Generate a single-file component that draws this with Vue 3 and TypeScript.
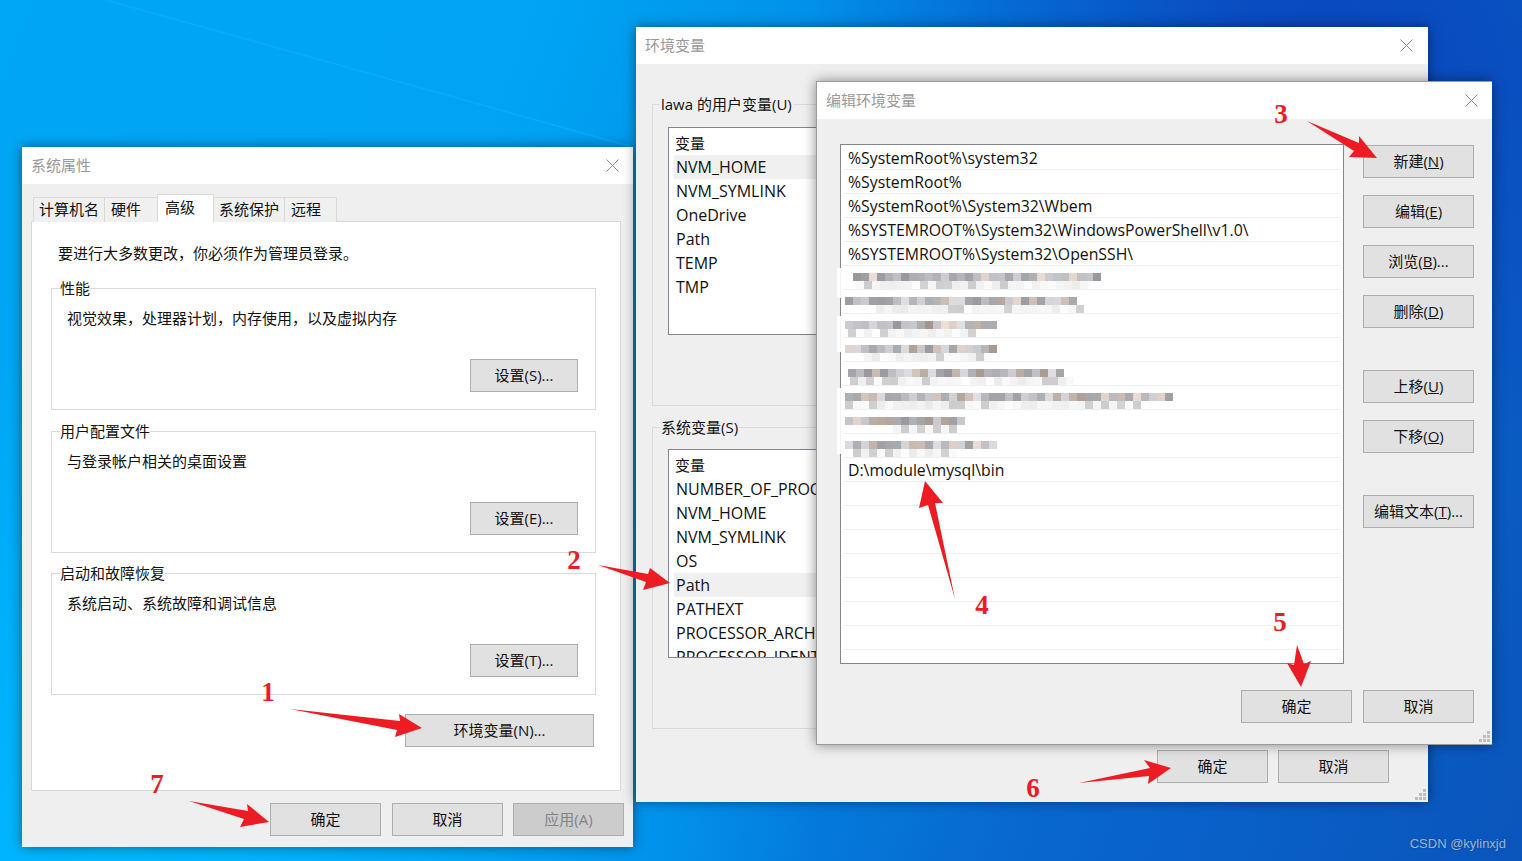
<script setup lang="ts">
/**
 * Three overlapping Windows dialogs (system properties, environment variables,
 * edit variable) on the desktop, with numbered red arrows on top.
 */
const perfGroups = [
  { title: '性能', text: '视觉效果，处理器计划，内存使用，以及虚拟内存', btn: '设置(S)...' },
  { title: '用户配置文件', text: '与登录帐户相关的桌面设置', btn: '设置(E)...' },
  { title: '启动和故障恢复', text: '系统启动、系统故障和调试信息', btn: '设置(T)...' },
]
const tabs = ['计算机名', '硬件', '高级', '系统保护', '远程']
const userVars = ['NVM_HOME', 'NVM_SYMLINK', 'OneDrive', 'Path', 'TEMP', 'TMP']
const sysVars = ['NUMBER_OF_PROCESSORS', 'NVM_HOME', 'NVM_SYMLINK', 'OS', 'Path', 'PATHEXT', 'PROCESSOR_ARCHITECTURE', 'PROCESSOR_IDENTIFIER']

const pathRows = [
  '%SystemRoot%\\system32',
  '%SystemRoot%',
  '%SystemRoot%\\System32\\Wbem',
  '%SYSTEMROOT%\\System32\\WindowsPowerShell\\v1.0\\',
  '%SYSTEMROOT%\\System32\\OpenSSH\\',
  '', '', '', '', '', '', '', '',
  'D:\\module\\mysql\\bin',
  '', '', '', '', '', '', '', '',
]

const sideButtons = [
  { pre: '新建(', key: 'N', cls: 'gap-0' },
  { pre: '编辑(', key: 'E', cls: 'gap-0' },
  { pre: '浏览(', key: 'B', post: ')...', cls: 'gap-0' },
  { pre: '删除(', key: 'D', cls: 'gap-1' },
  { pre: '上移(', key: 'U', cls: 'gap-0' },
  { pre: '下移(', key: 'O', cls: 'gap-1' },
  { pre: '编辑文本(', key: 'T', post: ')...', cls: 'gap-0' },
]

// blurred rows of the path list: [top, main band x0, x1, lower band x0, x1]
const blurRows = [
  [273, 853, 1098, 856, 1086],
  [297, 845, 1070, 860, 1080],
  [321, 845, 990, 848, 973],
  [345, 845, 990, 864, 990],
  [369, 848, 1062, 850, 1070],
  [393, 845, 1173, 845, 1140],
  [417, 845, 965, 893, 957],
  [441, 845, 990, 853, 957],
]

function rnd(seed: number) {
  const v = Math.sin(seed * 127.1 + 311.7) * 43758.5453
  return v - Math.floor(v)
}

type Cell = { x: number; y: number; fill: string }
const mosaic: Cell[] = []
const cell = 8
blurRows.forEach(([top, a0, a1, b0, b1], r) => {
  for (let x = a0; x < a1; x += cell) {
    const n = rnd(r * 100 + x)
    const g = Math.round(150 + n * 75)
    const warm = rnd(x + r) > 0.75 ? 14 : 0
    mosaic.push({ x, y: top, fill: `rgb(${g + warm},${g},${g - warm + 4})` })
  }
  for (let x = b0; x < b1; x += cell) {
    const n = rnd(r * 200 + x + 7)
    const g = n > 0.72 ? Math.round(188 + n * 22) : Math.round(234 + n * 28)
    mosaic.push({ x, y: top + 8, fill: `rgb(${g},${g},${g})` })
  }
})

const arrows = [
  '290,709 400,721 399,714 422,728 395,737 397,730',
  '598,565 648,574 650,568 670,583 643,590 646,582',
  '1307,121 1359,143 1359,136 1377,158 1349,157 1354,151',
  '955,599 928,505 919,508 925,481 943,503 935,503',
  '1297,645 1304,664 1311,661 1301,687 1287,663 1294,665',
  '1079,783 1150,768 1144,760 1171,768 1148,784 1149,776',
  '189,801 248,811 247,804 269,822 240,827 244,819',
]
const marks = [
  { n: '1', x: 268, y: 701 },
  { n: '2', x: 574, y: 569 },
  { n: '3', x: 1281, y: 123 },
  { n: '4', x: 982, y: 614 },
  { n: '5', x: 1280, y: 631 },
  { n: '6', x: 1033, y: 797 },
  { n: '7', x: 157, y: 793 },
]
const gripDots = [
  [8, 0], [4, 4], [8, 4], [0, 8], [4, 8], [8, 8],
]
</script>

<template>
  <div class="desktop">
    <svg class="beam" viewBox="0 0 1522 861">
      <line x1="106" y1="0" x2="629" y2="146" />
    </svg>

    <!-- system properties -->
    <section class="win win-sys">
      <header class="title">
        <span>系统属性</span>
        <svg class="close" viewBox="0 0 13 13"><path d="M.5.5l12 12M12.500.5l-12 12" /></svg>
      </header>
      <div class="sys-body">
        <nav class="tabs">
          <span v-for="t in tabs" :key="t" class="tab" :class="{ 'tab-on': t === '高级' }">{{ t }}</span>
        </nav>
        <div class="panel">
          <p class="notice">要进行大多数更改，你必须作为管理员登录。</p>
          <div v-for="g in perfGroups" :key="g.title" class="group">
            <span class="group-label">{{ g.title }}</span>
            <p class="group-text">{{ g.text }}</p>
            <button class="btn group-btn">{{ g.btn }}</button>
          </div>
          <button class="btn env-btn">环境变量(N)...</button>
        </div>
        <footer class="sys-foot">
          <button class="btn">确定</button>
          <button class="btn">取消</button>
          <button class="btn btn-off">应用(A)</button>
        </footer>
      </div>
    </section>

    <!-- environment variables -->
    <section class="win win-env">
      <header class="title">
        <span>环境变量</span>
        <svg class="close" viewBox="0 0 13 13"><path d="M.5.5l12 12M12.500.5l-12 12" /></svg>
      </header>
      <div class="env-body">
        <div class="env-group">
          <span class="env-label">lawa 的用户变量(U)</span>
          <div class="var-list">
            <div class="var-row var-head">变量</div>
            <div v-for="(v, i) in userVars" :key="v" class="var-row" :class="{ 'var-on': i === 0 }">{{ v }}</div>
          </div>
        </div>
        <div class="env-group env-group-2">
          <span class="env-label">系统变量(S)</span>
          <div class="var-list var-list-2">
            <div class="var-row var-head">变量</div>
            <div v-for="(v, i) in sysVars" :key="v" class="var-row" :class="{ 'var-on': i === 4 }">{{ v }}</div>
          </div>
        </div>
        <footer class="env-foot">
          <button class="btn">确定</button>
          <button class="btn">取消</button>
        </footer>
      </div>
      <svg class="grip" viewBox="0 0 11 11"><rect v-for="d in gripDots" :key="d.join()" :x="d[0]" :y="d[1]" width="3" height="3" /></svg>
    </section>

    <!-- edit variable -->
    <section class="win win-edit">
      <header class="title">
        <span>编辑环境变量</span>
        <svg class="close" viewBox="0 0 13 13"><path d="M.5.5l12 12M12.500.5l-12 12" /></svg>
      </header>
      <div class="edit-body">
        <div class="edit-main">
          <div class="path-list">
            <div v-for="(p, i) in pathRows" :key="i" class="path-row">{{ p }}</div>
          </div>
          <aside class="side">
            <button v-for="b in sideButtons" :key="b.pre" class="btn" :class="b.cls">
              {{ b.pre }}<u>{{ b.key }}</u>{{ b.post || ')' }}
            </button>
          </aside>
        </div>
        <footer class="edit-foot">
          <button class="btn">确定</button>
          <button class="btn">取消</button>
        </footer>
      </div>
      <svg class="grip" viewBox="0 0 11 11"><rect v-for="d in gripDots" :key="d.join()" :x="d[0]" :y="d[1]" width="3" height="3" /></svg>
    </section>

    <!-- mosaic + annotations -->
    <svg class="overlay" viewBox="0 0 1522 861">
      <rect x="837" y="268" width="6" height="30" fill="#fff" opacity=".9" />
      <rect x="837" y="316" width="6" height="36" fill="#fff" opacity=".9" />
      <rect x="837" y="388" width="6" height="66" fill="#fff" opacity=".9" />
      <rect v-for="(c, i) in mosaic" :key="i" :x="c.x" :y="c.y" width="8" height="8" :fill="c.fill" />
      <polygon v-for="a in arrows" :key="a" :points="a" fill="#ed1c24" />
      <text v-for="m in marks" :key="m.n" :x="m.x" :y="m.y" class="mark" text-anchor="middle">{{ m.n }}</text>
    </svg>

    <span class="watermark">CSDN @kylinxjd</span>
  </div>
</template>

<style scoped>
.desktop {
  position: relative;
  width: 1522px;
  height: 861px;
  overflow: hidden;
  background:
    radial-gradient(ellipse 520px 420px at 1320px 60px, #0a45bd 0%, rgba(10, 69, 189, 0) 100%),
    radial-gradient(ellipse 700px 520px at 120px 861px, #00b8ff 0%, rgba(0, 184, 255, 0) 100%),
    linear-gradient(110deg, #00a7f5 0%, #00a4f3 30%, #0188e6 52%, #0868cf 72%, #0a55bc 100%);
  font-family: "Open Sans", "Noto Sans CJK SC", sans-serif;
  font-size: 15px;
  color: #111;
}

.beam {
  position: absolute;
  inset: 0;
  width: 1522px;
  height: 861px;
  stroke: #0aaffa;
  stroke-width: 2;
  opacity: 0.7;
}

.win {
  position: absolute;
  display: flex;
  flex-direction: column;
  background: #efefef;
  box-shadow: 0 0 12px rgba(0, 0, 0, 0.45);
}

.win-sys {
  left: 22px;
  top: 147px;
  width: 611px;
  height: 700px;
}

.win-env {
  left: 636px;
  top: 27px;
  width: 792px;
  height: 775px;
}

.win-edit {
  left: 816px;
  top: 81px;
  width: 675px;
  height: 662px;
  border-left: 1px solid #9a9a9a;
  border-top: 1px solid #9a9a9a;
  border-bottom: 1px solid #9a9a9a;
}

.title {
  display: flex;
  align-items: center;
  justify-content: space-between;
  flex: none;
  height: 37px;
  box-sizing: border-box;
  padding: 0 15px 0 9px;
  background: #fff;
  color: #999;
  font-size: 15px;
}

.win-sys .title,
.win-edit .title {
  padding-right: 14px;
}

.title span {
  margin-top: -2px;
}

.close {
  width: 13px;
  height: 13px;
  fill: none;
  stroke: #8a8a8a;
  stroke-width: 1;
}

.btn {
  flex: none;
  width: 111px;
  height: 33px;
  padding: 0;
  border: 1px solid #adadad;
  background: #e1e1e1;
  color: #111;
  font: inherit;
  font-size: 15px;
  line-height: 1;
}

.btn-off {
  background: #ccc;
  color: #838383;
}

.sys-body {
  display: flex;
  flex-direction: column;
  flex: 1;
  padding: 11px 9px 0;
}

.tabs {
  display: flex;
  align-items: flex-end;
  height: 27px;
  margin-bottom: -1px;
  padding-left: 2px;
  position: relative;
  z-index: 1;
}

.tab {
  display: flex;
  align-items: center;
  height: 25px;
  padding: 0 0 3px 6px;
  box-sizing: border-box;
  border: 1px solid #d9d9d9;
  border-bottom: none;
  border-left-width: 0;
  background: #f0f0f0;
  font-size: 15px;
}

.tab:nth-child(1) {
  width: 72px;
  padding-left: 5px;
  border-left-width: 1px;
}
.tab:nth-child(2) {
  width: 53px;
}
.tab:nth-child(3) {
  width: 57px;
  height: 28px;
  padding: 0 0 4px 7px;
  background: #fff;
  border-left-width: 1px;
  border-right-width: 1px;
  margin-left: -1px;
}
.tab:nth-child(4) {
  width: 71px;
  padding-left: 5px;
}
.tab:nth-child(5) {
  width: 52px;
}

.panel {
  display: flex;
  flex-direction: column;
  width: 590px;
  height: 570px;
  box-sizing: border-box;
  border: 1px solid #d9d9d9;
  background: #fff;
  padding: 0 24px 0 19px;
}

.notice {
  margin: 20px 0 24px 7px;
  line-height: 22px;
}

.group {
  display: flex;
  flex-direction: column;
  flex: none;
  height: 122px;
  box-sizing: border-box;
  margin-bottom: 20px;
  border: 1px solid #d9d9d9;
  padding: 0 17px 17px 15px;
}

.group:nth-child(2) {
  margin-bottom: 21px;
}

.group-label {
  align-self: flex-start;
  margin: -11px 0 0 -7px;
  background: #fff;
  line-height: 20px;
}

.group-text {
  margin: 9px 0 0;
  line-height: 22px;
}

.group-btn {
  margin-top: auto;
  align-self: flex-end;
  width: 108px;
}

.env-btn {
  align-self: flex-end;
  width: 189px;
  margin-top: -1px;
  margin-right: 2px;
}

.sys-foot {
  display: flex;
  justify-content: flex-end;
  gap: 10px;
  margin-top: 12px;
}

.sys-foot .btn:first-child {
  margin-right: 1px;
}

.env-body {
  display: flex;
  flex-direction: column;
  flex: 1;
  padding: 40px 16px 0;
}

.env-group {
  display: flex;
  flex-direction: column;
  flex: none;
  height: 302px;
  box-sizing: border-box;
  border: 1px solid #d9d9d9;
  padding: 0 15px;
}

.env-group-2 {
  margin-top: 21px;
}

.env-label {
  align-self: flex-start;
  margin: -11px 0 0 -8px;
  padding: 0 1px;
  background: #efefef;
  line-height: 20px;
  font-size: 15px;
}

.var-list {
  height: 208px;
  box-sizing: border-box;
  overflow: hidden;
  margin-top: 13px;
  border: 1px solid #82878f;
  background: #fff;
  padding: 3px 5px 0;
}

.var-list-2 {
  margin-top: 12px;
  height: 209px;
}

.var-row {
  height: 24px;
  line-height: 24px;
  padding-left: 2px;
  white-space: nowrap;
  font-size: 16px;
}

.var-head {
  padding-left: 1px;
  font-size: 15px;
}

.var-on {
  background: #f0f0f0;
}

.env-foot {
  display: flex;
  justify-content: flex-end;
  gap: 10px;
  margin: 21px 23px 0 0;
}

.edit-body {
  display: flex;
  flex-direction: column;
  flex: 1;
  padding: 25px 18px 0 23px;
}

.edit-main {
  display: flex;
  gap: 19px;
}

.path-list {
  width: 504px;
  height: 520px;
  box-sizing: border-box;
  overflow: hidden;
  border: 1px solid #82878f;
  background: #fff;
  padding: 1px 2px 0;
}

.path-row {
  height: 24px;
  box-sizing: border-box;
  border-bottom: 1px solid #f0f0f0;
  padding-left: 5px;
  line-height: 24px;
  white-space: nowrap;
  font-size: 15.8px;
}

.side {
  display: flex;
  flex-direction: column;
  padding-top: 1px;
}

.gap-0 {
  margin-bottom: 17px;
}

.gap-1 {
  margin-bottom: 42px;
}

.edit-foot {
  display: flex;
  justify-content: flex-end;
  gap: 11px;
  margin-top: 26px;
}

.grip {
  position: absolute;
  right: 2px;
  bottom: 2px;
  width: 11px;
  height: 11px;
  fill: #bdbdbd;
}

.overlay {
  position: absolute;
  inset: 0;
  width: 1522px;
  height: 861px;
  pointer-events: none;
}

.mark {
  font-family: "Liberation Serif", serif;
  font-weight: 700;
  font-size: 27px;
  fill: #ed1c24;
}

.watermark {
  position: absolute;
  right: 16px;
  bottom: 10px;
  font-family: "Liberation Sans", sans-serif;
  font-size: 13px;
  color: rgba(255, 255, 255, 0.6);
  text-shadow: 0 0 2px rgba(0, 0, 0, 0.3);
}
</style>
